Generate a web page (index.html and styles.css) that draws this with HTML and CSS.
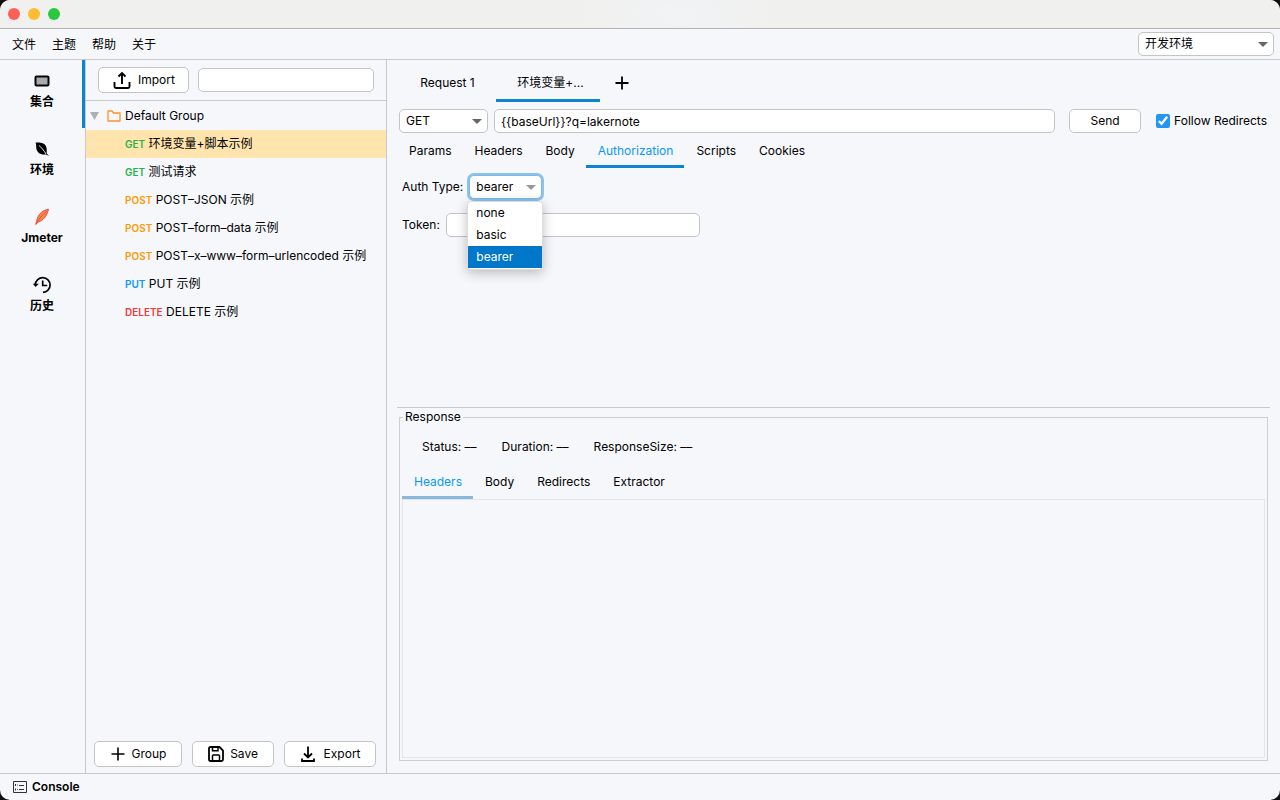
FILE: index.html
```html
<!DOCTYPE html>
<html lang="zh-CN">

<head>
    <meta charset="UTF-8">
    <meta name="viewport" content="width=device-width, initial-scale=1.0">
    <title>API Client</title>
    <link rel="stylesheet" href="styles.css">
</head>

<body>
    <div class="window">
        <header class="titlebar">
            <span class="dot red"></span>
            <span class="dot yellow"></span>
            <span class="dot green"></span>
        </header>

        <nav class="menubar">
            <button type="button">文件</button>
            <button type="button">主题</button>
            <button type="button">帮助</button>
            <button type="button">关于</button>
            <div class="select env-select">
                <select aria-label="环境">
                    <option>开发环境</option>
                </select>
            </div>
        </nav>

        <div class="content">
            <nav class="sidebar">
                <button type="button" class="side-item active">
                    <svg width="20" height="20" viewBox="0 0 20 20">
                        <rect x="3.5" y="5.500" width="13" height="9" rx="1" fill="#aaa" stroke="#000" stroke-width="2" />
                    </svg>
                    集合
                </button>
                <button type="button" class="side-item">
                    <svg width="20" height="20" viewBox="0 0 20 20">
                        <path d="M3.5 3.5C9 3.2 13 4 14.300 8c.6 2 .4 4.300.4 6.200L17 17l-2.800-1.600C8 16.500 5 13 4.300 9.500 4 7.500 4.500 5.500 3.500 3.500z" fill="#000" />
                        <path d="M7 6.500c2.500 2 4.500 4.500 7 8.500" fill="none" stroke="#f5f7fb" stroke-width="0.900" />
                    </svg>
                    环境
                </button>
                <button type="button" class="side-item">
                    <svg width="20" height="20" viewBox="0 0 20 20">
                        <path d="M16.500 2.300C11 3 7 6.500 5.300 11.500c-.5 1.700-.8 4-1.600 6l2.600-2.500C10.500 14 15 9.500 16.500 2.300z" fill="#f58a45" stroke="#e0304c" stroke-width="0.800" />
                        <path d="M14.500 4.500C10 8 7 12 4 17" fill="none" stroke="#ee3c2c" stroke-width="0.800" />
                    </svg>
                    Jmeter
                </button>
                <button type="button" class="side-item">
                    <svg width="20" height="20" viewBox="0 0 20 20" fill="none" stroke="#000" stroke-width="1.700">
                        <path d="M3.300 9.500A7.400 7.400 0 1 1 11 17.400M10.700 5.500v5h4.500" />
                        <path d="M.8 8.700h6l-3.200 3.200z" fill="#000" stroke="none" />
                    </svg>
                    历史
                </button>
            </nav>

            <aside class="collections">
                <div class="toolbar">
                    <button type="button" class="btn">
                        <svg width="20" height="20" viewBox="0 0 20 20" fill="none" stroke="#000" stroke-width="1.900">
                            <path d="M2.500 12v4.500q0 1.500 1.500 1.500h12q1.500 0 1.500-1.500V12M10 14V3.500M6.500 6.500L10 3l3.500 3.500" />
                        </svg>
                        Import
                    </button>
                    <input type="text" class="field search" aria-label="Search">
                </div>

                <ul class="tree">
                    <li class="group">
                        <svg width="9" height="8" viewBox="0 0 9 8">
                            <path d="M0 0h9L4.500 8z" fill="#afafaf" />
                        </svg>
                        <svg width="14" height="12" viewBox="0 0 14 12">
                            <path d="M1 10V1h4l1.500 2H13V11H1z" fill="none" stroke="#ff9226" stroke-width="1.300" stroke-linejoin="round" />
                        </svg>
                        Default Group
                    </li>
                    <li class="selected"><span class="method get">GET</span> 环境变量+脚本示例</li>
                    <li><span class="method get">GET</span> 测试请求</li>
                    <li><span class="method post">POST</span> POST–JSON 示例</li>
                    <li><span class="method post">POST</span> POST–form–data 示例</li>
                    <li><span class="method post">POST</span> POST–x–www–form–urlencoded 示例</li>
                    <li><span class="method put">PUT</span> PUT 示例</li>
                    <li><span class="method delete">DELETE</span> DELETE 示例</li>
                </ul>

                <div class="actions">
                    <button type="button" class="btn">
                        <svg width="16" height="16" viewBox="0 0 16 16" fill="none" stroke="#000" stroke-width="1.600">
                            <path d="M8 1.500v13M1.500 8h13" />
                        </svg>
                        Group
                    </button>
                    <button type="button" class="btn">
                        <svg width="16" height="16" viewBox="0 0 16 16" fill="none" stroke="#000" stroke-width="1.800">
                            <path d="M2.500 1h9L15 4.500v9q0 1.500-1.500 1.500h-11Q1 15 1 13.500v-11Q1 1 2.500 1z" />
                            <path d="M4.500 15V9.800q0-.8.8-.8h5.400q.8 0 .8.800V15M4.500 1v3.700h5.500V1" stroke-width="1.500" />
                        </svg>
                        Save
                    </button>
                    <button type="button" class="btn export">
                        <svg width="16" height="16" viewBox="0 0 16 16" fill="none" stroke="#000" stroke-width="1.800">
                            <path d="M2 12.500V15h12v-2.500M8 .5v10.500M4 7.500l4 4 4-4" />
                        </svg>
                        Export
                    </button>
                </div>
            </aside>

            <main class="main">
                <section class="request">
                    <div class="request-tabs">
                        <button type="button">Request 1</button>
                        <button type="button" class="active">环境变量+...</button>
                        <button type="button" class="add" aria-label="New request">
                            <svg width="14" height="14" viewBox="0 0 14 14">
                                <path d="M7 .5v13M.5 7h13" stroke="#000" stroke-width="1.800" />
                            </svg>
                        </button>
                    </div>

                    <div class="url-row">
                        <div class="select method-select">
                            <select aria-label="Method">
                                <option>GET</option>
                            </select>
                        </div>
                        <input type="text" class="field url" aria-label="URL" value="{{baseUrl}}?q=lakernote">
                        <button type="button" class="btn send">Send</button>
                        <label class="redirects"><input type="checkbox" checked> Follow Redirects</label>
                    </div>

                    <div class="tabs">
                        <button type="button">Params</button>
                        <button type="button">Headers</button>
                        <button type="button">Body</button>
                        <button type="button" class="active">Authorization</button>
                        <button type="button">Scripts</button>
                        <button type="button">Cookies</button>
                    </div>

                    <div class="auth">
                        <div class="auth-row">
                            <label for="authType">Auth Type:</label>
                            <div class="select auth-select">
                                <select id="authType">
                                    <option>none</option>
                                    <option>basic</option>
                                    <option selected>bearer</option>
                                </select>
                                <ul class="popup" role="listbox" aria-label="Auth Type">
                                    <li role="option">none</li>
                                    <li role="option">basic</li>
                                    <li role="option" class="current" aria-selected="true">bearer</li>
                                </ul>
                            </div>
                        </div>
                        <div class="auth-row">
                            <label for="token">Token:</label>
                            <input type="text" id="token" class="field token">
                        </div>
                    </div>
                </section>

                <div class="splitter"></div>

                <fieldset class="response">
                    <legend>Response</legend>
                    <div class="stats">
                        <span>Status: ––</span>
                        <span>Duration: ––</span>
                        <span>ResponseSize: ––</span>
                    </div>
                    <div class="tabs">
                        <button type="button" class="active">Headers</button>
                        <button type="button">Body</button>
                        <button type="button">Redirects</button>
                        <button type="button">Extractor</button>
                    </div>
                    <div class="result"></div>
                </fieldset>
            </main>
        </div>

        <footer class="statusbar">
            <button type="button">
                <svg width="16" height="14" viewBox="0 0 16 14" fill="none" stroke="#333">
                    <path d="M1.500 1.500h13v11h-13zM7 5.500h5M7 9.500h5" />
                    <path d="M3.500 4v2M5 5h.8M3.500 8.500v2M5 9.500h.8" />
                </svg>
                Console
            </button>
        </footer>
    </div>
</body>

</html>
```

FILE: styles.css
```css
* {
    box-sizing: border-box;
}

body {
    margin: 0;
    background: #111;
    color: #000;
    font-family: Inter, "Noto Sans CJK SC", sans-serif;
    font-size: 12px;
    line-height: 16px;
}

button,
input,
select {
    font: inherit;
    color: inherit;
    margin: 0;
}

button {
    background: none;
    border: none;
    padding: 0;
}

svg {
    flex: none;
}

ul {
    list-style: none;
    margin: 0;
    padding: 0;
}

.window {
    display: flex;
    flex-direction: column;
    height: 100vh;
    background: #f5f7fb;
    border-radius: 10px;
    overflow: hidden;
}

.titlebar {
    display: flex;
    align-items: center;
    gap: 8px;
    height: 29px;
    padding-left: 8px;
    background: radial-gradient(ellipse 100px 40px at 53% 50%, #f1f3f5, #f0f0ee);
    border-bottom: 1px solid #b4b4b4;
}

.dot {
    width: 12px;
    height: 12px;
    border-radius: 50%;
}

.red {
    background: #ff5f57;
}

.yellow {
    background: #febc2e;
}

.green {
    background: #28c840;
}

.menubar {
    display: flex;
    align-items: center;
    gap: 16px;
    height: 31px;
    padding: 0 6px 0 12px;
    border-bottom: 1px solid #c8c9cc;
}

.menubar button {
    padding-top: 2px;
}

.content {
    display: flex;
    flex: 1;
    min-height: 0;
}

/* form controls */
.btn,
.field,
.select select {
    height: 24px;
    background: #fff;
    border: 1px solid #c4c4c4;
    border-radius: 5px;
}

.btn {
    display: flex;
    align-items: center;
    justify-content: center;
    gap: 6px;
}

.field {
    padding: 0 6px;
    min-width: 0;
}

.select {
    position: relative;
}

.select select {
    display: block;
    width: 100%;
    padding: 0 24px 0 6px;
    appearance: none;
}

.select::after {
    content: "";
    position: absolute;
    top: 10px;
    right: 6px;
    border: 5px solid transparent;
    border-top-color: #666;
    border-bottom: none;
}

.env-select {
    width: 136px;
    margin-left: auto;
}

/* left navigation */
.sidebar {
    width: 86px;
    border-right: 1px solid #c8c9cc;
}

.side-item {
    display: flex;
    flex-direction: column;
    align-items: center;
    justify-content: center;
    gap: 3px;
    width: 100%;
    height: 68px;
    padding: 0 1px 8px 0;
    font-weight: bold;
}

.side-item.active {
    box-shadow: inset -3px 0 #0d84d1;
}

/* collections panel */
.collections {
    display: flex;
    flex-direction: column;
    width: 301px;
    border-right: 1px solid #c8c9cc;
}

.toolbar {
    display: flex;
    align-items: center;
    gap: 9px;
    height: 41px;
    padding: 0 12px;
    border-bottom: 1px solid #c8c9cc;
}

.toolbar .btn {
    width: 91px;
    height: 26px;
}

.search {
    flex: 1;
}

.tree {
    flex: 1;
    padding-top: 1px;
}

.tree li {
    height: 28px;
    padding-left: 39px;
    line-height: 28px;
    white-space: nowrap;
}

.tree .group {
    display: flex;
    align-items: center;
    gap: 4px;
    padding-left: 4px;
}

.tree .group svg + svg {
    margin-left: 4px;
}

.tree .selected {
    background: #ffe4ad;
}

.method {
    font-size: 10px;
    font-weight: 600;
}

.get {
    color: #28b24b;
}

.post {
    color: #ff9800;
}

.put {
    color: #0a98ff;
}

.delete {
    color: #f03a3a;
}

.actions {
    display: flex;
    gap: 10px;
    padding: 0 10px 6px 8px;
}

.actions .btn {
    flex: 88;
    height: 26px;
}

.actions .btn + .btn {
    flex: 82;
}

.actions .btn.export {
    flex: 92;
    gap: 8px;
}

/* request editor */
.main {
    display: flex;
    flex: 1;
    flex-direction: column;
    min-width: 0;
    padding: 0 10px;
}

.request {
    height: 347px;
    padding: 0 2px;
}

.request-tabs {
    display: flex;
    height: 42px;
}

.request-tabs button {
    width: 104px;
    padding: 7px 0 1px 5px;
    border-bottom: 3px solid transparent;
}

.request-tabs button:first-child {
    width: 97px;
    padding-left: 0;
}

.request-tabs .add {
    display: flex;
    align-items: center;
    width: 44px;
    padding-left: 15px;
}

.request-tabs .active {
    border-color: #0d84d1;
}

.url-row {
    display: flex;
    align-items: center;
    padding: 7px 1px 0 0;
}

.method-select {
    width: 89px;
    margin-right: 6px;
}

.url {
    flex: 1;
}

.send {
    width: 72px;
    margin: 0 15px 0 14px;
}

.redirects {
    display: flex;
    align-items: center;
    gap: 4px;
}

.redirects input {
    width: 14px;
    height: 14px;
    accent-color: #2196f3;
}

.tabs {
    display: flex;
}

.tabs button {
    height: 35px;
    padding: 4px 11px 0 12px;
    border-bottom: 3px solid transparent;
}

.tabs .active {
    color: #0a98ff;
    border-color: #0d84d1;
}

.request .tabs {
    margin-left: -2px;
}

.auth {
    display: flex;
    flex-direction: column;
    gap: 14px;
    padding: 7px 3px;
}

.auth-row {
    display: flex;
    align-items: center;
    gap: 6px;
}

.auth-select {
    width: 73px;
}

.auth-select select {
    border-color: #7cb9e8;
    box-shadow: 0 0 0 2px #8cc3ee;
}

.auth-select::after {
    border-top-color: #999;
}

.popup {
    position: absolute;
    top: 26px;
    left: -2px;
    z-index: 1;
    width: 76px;
    padding-bottom: 1px;
    background: #fff;
    border: 1px solid #ddd;
    border-radius: 4px;
    box-shadow: 0 3px 12px rgba(0, 0, 0, 0.25);
}

.popup li {
    padding: 3px 8px;
}

.popup .current {
    background: #0077c8;
    color: #fff;
}

.token {
    width: 254px;
}

.splitter {
    height: 1px;
    background: #c8c9cc;
}

/* response */
.response {
    display: flex;
    flex: 1;
    flex-direction: column;
    margin: 1px 2px 12px;
    padding: 0 2px 2px;
    border: 1px solid #ccced1;
    min-width: 0;
}

.response legend {
    margin-left: 1px;
    padding: 0 2px;
}

.stats {
    display: flex;
    gap: 25px;
    padding: 14px 20px 9px;
}

.response .active {
    border-color: #88b8dd;
}

.result {
    flex: 1;
    border: 1px solid #e4e5e7;
}

.statusbar {
    height: 27px;
    padding: 0 12px;
    border-top: 1px solid #c8c9cc;
}

.statusbar button {
    display: flex;
    align-items: center;
    gap: 4px;
    height: 26px;
    font-weight: 600;
}
```
